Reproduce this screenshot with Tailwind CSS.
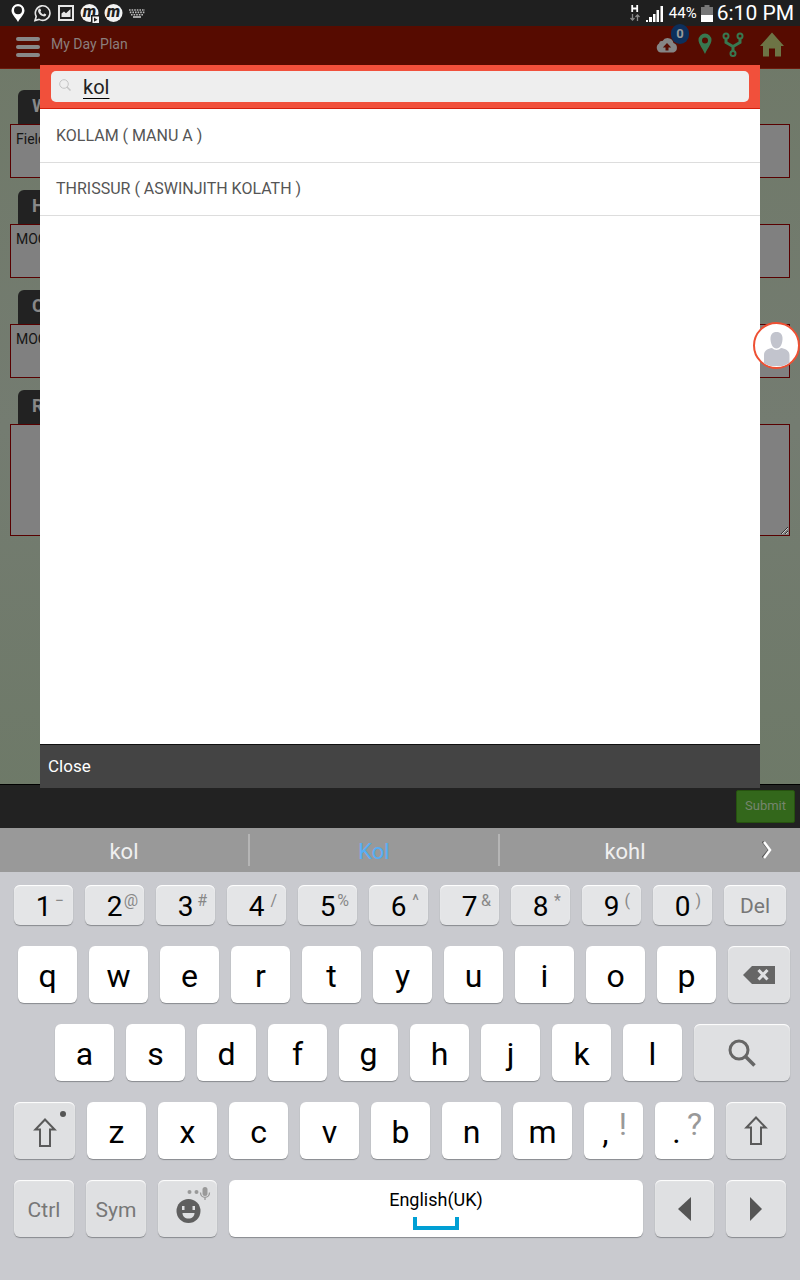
<!DOCTYPE html>
<html lang="en">
<head>
<meta charset="utf-8">
<meta name="viewport" content="width=device-width, initial-scale=1">
<title>My Day Plan</title>
<script src="https://cdn.jsdelivr.net/npm/@tailwindcss/browser@4"></script>
</head>
<body class="flex min-h-screen flex-col bg-[#c9cacf] font-[Roboto,sans-serif]">

<!-- Status bar -->
<div class="flex h-[26px] items-center justify-between bg-[#1f1f1f] pr-[6px] pl-[10px] text-white">
  <div class="flex items-center gap-[6px]">
    <svg class="h-[18px] w-4" viewBox="0 0 16 18" aria-label="Location"><path fill="#fff" fill-rule="evenodd" d="M8 0a6.500 6.500 0 0 1 6.500 6.500C14.500 10.500 10 14 8 18 6 14 1.500 10.500 1.500 6.500A6.500 6.500 0 0 1 8 0zm0 2.300a4 4 0 1 0 0 8 4 4 0 0 0 0-8z"/></svg>
    <svg class="h-[18px] w-[20px]" viewBox="0 0 20 18" aria-label="WhatsApp" fill="none"><path stroke="#e6e6e6" stroke-width="1.600" d="M3 16.500l1.200-4A7.300 7.300 0 1 1 7 15.400z"/><path fill="#e6e6e6" d="M7.300 4.700c.6-.3 1-.1 1.200.4l.6 1.400c.1.500-.6.900-.7 1.300.6 1.200 1.600 2.100 2.800 2.600.5-.2.800-1 1.200-.9l1.600.8c.4.300 0 1.300-.5 1.700-.8.600-1.900.5-2.900.1-2-.8-3.700-2.400-4.400-4.400-.3-1.100 0-2.300 1.100-3z"/></svg>
    <svg class="h-[18px] w-[16px]" viewBox="0 0 16 18" aria-label="Image"><path fill="none" stroke="#e6e6e6" stroke-width="2" d="M1 2h14v14H1z"/><path fill="#e6e6e6" d="M3.500 13V9.500L6 7.500l2 1.800L12.500 5v8z"/></svg>
    <svg class="h-5 w-[19px]" viewBox="0 0 19 20" aria-label="App"><circle cx="9.500" cy="10" r="9" fill="#f2f2f2"/><text x="9.500" y="14" text-anchor="middle" class="text-[16px] font-black italic" fill="#1f1f1f">m</text><path fill="#1f1f1f" d="M11 12h8v8h-8z"/><path fill="#f2f2f2" d="M12.500 13.500h6.500v6.500h-6.500z"/><path fill="#1f1f1f" d="M14 14.500l3.500 2.200-3.500 2z"/></svg>
    <svg class="-ml-px h-5 w-[19px]" viewBox="0 0 19 20" aria-label="App"><circle cx="9.500" cy="10" r="9" fill="#f2f2f2"/><text x="9.500" y="14" text-anchor="middle" class="text-[16px] font-black italic" fill="#1f1f1f">m</text></svg>
    <svg class="h-[9px] w-4" viewBox="0 0 16 9" aria-label="Keyboard"><path stroke="#bbb" stroke-width="1.600" stroke-dasharray="1.600 1" d="M0 1h16M.8 3.400h15M2 5.800h12"/><path stroke="#ddd" stroke-width="1.400" d="M4 8h8"/></svg>
  </div>
  <div class="flex items-center">
    <svg class="mr-[6px] h-[18px] w-[10px]" viewBox="0 0 10 18" aria-label="HSPA" fill="none"><path stroke="#fff" stroke-width="1.800" d="M2.200 1v7M7.200 1v7M2.200 4.500h5"/><path stroke="#888" stroke-width="1.300" d="M2.500 10v6M.5 14l2 2 2-2M7.500 17v-6M5.500 13l2-2 2 2"/></svg>
    <svg class="mr-[6px] h-[17px] w-[17px]" viewBox="0 0 17 17" aria-label="Signal"><path fill="#fff" d="M0 15h2v2H0zM3 12h3v5H3zM7 9h2.500v8H7zM10.500 5H13v12h-2.500zM14.500 1H17v16h-2.500z"/></svg>
    <span class="text-[15px] leading-[26px]">44%</span>
    <svg class="mx-1 h-[17px] w-[12px]" viewBox="0 0 12 17" aria-label="Battery"><path fill="#777" d="M3.500 0h5v2H12v8H0V2h3.500z"/><path fill="#fff" d="M0 10h12v7H0z"/></svg>
    <span class="text-[21px] leading-6">6:10 PM</span>
  </div>
</div>

<!-- App with search dialog on top -->
<div class="relative flex grow flex-col bg-linear-to-b from-[#6f7968] via-[#747c71] to-[#6d7967]">
  <header class="flex h-[43px] items-center justify-between border-b border-[#6d1a0c] bg-[#560b00] pr-4 pl-4">
    <div class="flex items-center gap-[11px]">
      <button class="flex w-6 flex-col gap-1" aria-label="Menu">
        <span class="h-1 rounded-xs bg-[#888]"></span><span class="h-1 rounded-xs bg-[#888]"></span><span class="h-1 rounded-xs bg-[#888]"></span>
      </button>
      <h1 class="pb-[6px] text-[14px] leading-5 text-[#8b7f7d]">My Day Plan</h1>
    </div>
    <div class="flex items-center pb-[6px]">
      <button class="relative mr-[20px] block" aria-label="Upload">
        <svg class="mt-0.5 h-4 w-[22px]" viewBox="0 0 22 16"><path fill="#858585" fill-rule="evenodd" d="M5 15.500A5 5 0 0 1 3 6.400 3 3 0 0 1 6.500 4 6 6 0 0 1 17.500 6 5 5 0 0 1 17.500 15.500zM11 6L6.800 10.500H9.500v3h3v-3h2.700z"/></svg>
        <span class="absolute -top-[11px] left-[15px] flex h-5 w-[18px] items-center justify-center rounded-full bg-[#0c2f5c] pb-0.5 text-[13px] leading-none font-bold text-[#999]">0</span>
      </button>
      <svg class="mr-[10px] h-[22px] w-[14px]" viewBox="0 0 14 22" aria-label="Place"><path fill="#38784f" fill-rule="evenodd" d="M7 .5A6.500 6.500 0 0 1 13.500 7c0 4-4.500 9-6.500 14C5 16 .5 11 .5 7A6.500 6.500 0 0 1 7 .5zm0 4a3 3 0 1 0 0 6 3 3 0 0 0 0-6z"/></svg>
      <svg class="mr-4 h-[25px] w-[22px]" viewBox="0 0 22 25" aria-label="Branches" fill="none" stroke="#38784f"><g stroke-width="2"><circle cx="4" cy="4" r="2.500"/><circle cx="18" cy="4" r="2.500"/><circle cx="11" cy="21.500" r="2.500"/></g><path stroke-width="3" d="M4 7v3.500l7 4 7-4V7M11 14v5"/></svg>
      <svg class="h-[25px] w-6" viewBox="0 0 24 25" aria-label="Home"><path fill="#6d7445" d="M12 .5L24 14h-3v10.500h-6v-8H9v8H3V14H0z"/></svg>
    </div>
  </header>

  <form id="plan" class="flex grow flex-col gap-3 px-[10px] pt-[21px]">
    <div>
      <label for="f1" class="ml-2 block h-[34px] w-40 rounded-t-md bg-[#222] px-[14px] text-[18px] leading-8 font-bold text-[#888]">W</label>
      <textarea id="f1" readonly class="block h-[54px] w-full resize-none border border-[#580000] bg-[#808080] px-[5px] py-1 text-[14px] leading-5 text-[#151515]">Field</textarea>
    </div>
    <div>
      <label for="f2" class="ml-2 block h-[34px] w-40 rounded-t-md bg-[#222] px-[14px] text-[18px] leading-8 font-bold text-[#888]">H</label>
      <textarea id="f2" readonly class="block h-[54px] w-full resize-none border border-[#580000] bg-[#808080] px-[5px] py-1 text-[14px] leading-5 text-[#151515]">MOO</textarea>
    </div>
    <div>
      <label for="f3" class="ml-2 block h-[34px] w-40 rounded-t-md bg-[#222] px-[14px] text-[18px] leading-8 font-bold text-[#888]">C</label>
      <textarea id="f3" readonly class="block h-[54px] w-full resize-none border border-[#580000] bg-[#808080] px-[5px] py-1 text-[14px] leading-5 text-[#151515]">MOO</textarea>
    </div>
    <div>
      <label for="f4" class="ml-2 block h-[34px] w-40 rounded-t-md bg-[#222] px-[14px] text-[18px] leading-8 font-bold text-[#888]">R</label>
      <textarea id="f4" class="block h-[112px] w-full resize border border-[#580000] bg-[#808080]"></textarea>
    </div>
  </form>

  <footer class="flex h-11 items-center justify-end border-t border-black bg-[#222] pr-[5px]">
    <button form="plan" class="h-[33px] rounded-xs border border-[#26520f] bg-[#33671b] px-2 pb-0.5 text-[13px] text-[#76856e]">Submit</button>
  </footer>

  <!-- Search dialog -->
  <div role="dialog" aria-label="Search" class="absolute inset-x-10 top-[39px] bottom-10 flex flex-col bg-white">
    <div class="h-11 border-b border-[#d3200c] bg-[#f1503b] px-[11px] pt-[6px]">
      <label class="flex h-[31px] items-center rounded-[5px] bg-[#eee] pl-2">
        <svg class="mb-1 h-3 w-3" viewBox="0 0 12 12" fill="none" stroke="#c4c4c4"><circle cx="5" cy="5" r="4.300"/><path stroke-width="1.500" d="M8 8l3.500 3.500"/></svg>
        <input type="text" value="kol" aria-label="Search" class="ml-3 h-[31px] min-w-0 grow bg-transparent text-[20px] text-[#222] underline decoration-black decoration-1 underline-offset-4 outline-none">
      </label>
    </div>
    <ul class="grow text-[16px] text-[#555]">
      <li class="flex h-[54px] items-center border-b border-[#ddd] px-4">KOLLAM ( MANU A )</li>
      <li class="flex h-[53px] items-center border-b border-[#ddd] px-4">THRISSUR ( ASWINJITH KOLATH )</li>
    </ul>
    <div class="flex h-11 items-center border-t border-[#111] bg-[#444] px-2">
      <button class="text-[17px] text-white">Close</button>
    </div>
  </div>

  <!-- Floating contact bubble -->
  <button aria-label="Contact" class="absolute top-[296px] right-0 h-[47px] w-[47px] overflow-hidden rounded-full border-2 border-[#ee5033] bg-white">
    <svg class="h-full w-full" viewBox="0 0 43 43" fill="#c2c4cd"><path d="M21.500 8c4 0 6.300 2.500 6 7.500-.3 5-2.500 9-6 9s-5.700-4-6-9c-.3-5 2-7.500 6-7.500z"/><path d="M9 42V31c0-4.500 4-6.500 8-7 2.500 2.500 6.500 2.500 9 0 4 .5 8.500 2.500 8.500 7v11z"/></svg>
  </button>
</div>

<!-- Suggestions -->
<div class="flex h-11 items-center bg-[#999] text-[22px] text-[#f0f0f0]">
  <button class="h-8 w-5/16 border-r-2 border-[#b5b5b5] leading-[36px]">kol</button>
  <button class="h-8 w-5/16 border-r-2 border-[#b5b5b5] leading-[36px] text-[#55aef5]">Kol</button>
  <button class="h-8 w-5/16 leading-[36px]">kohl</button>
  <button class="flex w-1/16 pl-3" aria-label="More"><svg class="h-5 w-[10px]" viewBox="0 0 10 20" fill="none"><path stroke="#555" stroke-width="2" d="M.5 1.500L7 10 .5 17.500"/><path stroke="#fff" stroke-width="2.500" d="M2 2l6 8-6 8"/></svg></button>
</div>

<!-- Keyboard -->
<div class="flex flex-col gap-[21px] pt-[13px] pb-[43px] text-[32px] text-black">
  <div class="flex h-10 gap-3 px-[14px] text-[28px] *:flex *:flex-1 *:justify-center *:rounded-md *:bg-[#e4e5e7] *:shadow-[0_1px_1px_#888a8e,inset_0_1px_1px_#fff]">
    <button class="relative leading-[44px]">1<span class="absolute top-1 right-[9px] text-[16px] leading-6 text-[#888]">−</span></button>
    <button class="relative leading-[44px]">2<span class="absolute top-1 right-[6px] text-[16px] leading-6 text-[#888]">@</span></button>
    <button class="relative leading-[44px]">3<span class="absolute top-1 right-[8px] text-[16px] leading-6 text-[#888]">#</span></button>
    <button class="relative leading-[44px]">4<span class="absolute top-1 right-[9px] text-[16px] leading-6 text-[#888]">/</span></button>
    <button class="relative leading-[44px]">5<span class="absolute top-1 right-[8px] text-[16px] leading-6 text-[#888]">%</span></button>
    <button class="relative leading-[44px]">6<span class="absolute top-1 right-[9px] text-[16px] leading-6 text-[#888]">^</span></button>
    <button class="relative leading-[44px]">7<span class="absolute top-1 right-[8px] text-[16px] leading-6 text-[#888]">&amp;</span></button>
    <button class="relative leading-[44px]">8<span class="absolute top-1 right-[9px] text-[16px] leading-6 text-[#888]">*</span></button>
    <button class="relative leading-[44px]">9<span class="absolute top-1 right-[11px] text-[16px] leading-6 text-[#888]">(</span></button>
    <button class="relative leading-[44px]">0<span class="absolute top-1 right-[11px] text-[16px] leading-6 text-[#888]">)</span></button>
    <button class="max-w-[62px] min-w-[62px] text-[21px] leading-[42px] text-[#777]">Del</button>
  </div>

  <div class="flex h-[57px] gap-3 pr-[10px] pl-[18px] leading-[60px]">
    <button class="flex-1 rounded-md bg-white shadow-[0_1px_1px_#888a8e]">q</button>
    <button class="flex-1 rounded-md bg-white shadow-[0_1px_1px_#888a8e]">w</button>
    <button class="flex-1 rounded-md bg-white shadow-[0_1px_1px_#888a8e]">e</button>
    <button class="flex-1 rounded-md bg-white shadow-[0_1px_1px_#888a8e]">r</button>
    <button class="flex-1 rounded-md bg-white shadow-[0_1px_1px_#888a8e]">t</button>
    <button class="flex-1 rounded-md bg-white shadow-[0_1px_1px_#888a8e]">y</button>
    <button class="flex-1 rounded-md bg-white shadow-[0_1px_1px_#888a8e]">u</button>
    <button class="flex-1 rounded-md bg-white shadow-[0_1px_1px_#888a8e]">i</button>
    <button class="flex-1 rounded-md bg-white shadow-[0_1px_1px_#888a8e]">o</button>
    <button class="flex-1 rounded-md bg-white shadow-[0_1px_1px_#888a8e]">p</button>
    <button aria-label="Backspace" class="flex w-[62px] items-center justify-center rounded-md bg-[#dfe0e2] shadow-[0_1px_1px_#888a8e,inset_0_1px_1px_#fff]"><svg class="h-[18px] w-8" viewBox="0 0 32 18"><path fill="#666" d="M0 9L9 0h23v18H9z"/><path stroke="#dfe0e2" stroke-width="3" d="M15.500 4l9 9.500M24.500 4l-9 9.500"/></svg></button>
  </div>

  <div class="flex h-[57px] gap-3 pr-[10px] pl-[55px] leading-[60px]">
    <button class="flex-1 rounded-md bg-white shadow-[0_1px_1px_#888a8e]">a</button>
    <button class="flex-1 rounded-md bg-white shadow-[0_1px_1px_#888a8e]">s</button>
    <button class="flex-1 rounded-md bg-white shadow-[0_1px_1px_#888a8e]">d</button>
    <button class="flex-1 rounded-md bg-white shadow-[0_1px_1px_#888a8e]">f</button>
    <button class="flex-1 rounded-md bg-white shadow-[0_1px_1px_#888a8e]">g</button>
    <button class="flex-1 rounded-md bg-white shadow-[0_1px_1px_#888a8e]">h</button>
    <button class="flex-1 rounded-md bg-white shadow-[0_1px_1px_#888a8e]">j</button>
    <button class="flex-1 rounded-md bg-white shadow-[0_1px_1px_#888a8e]">k</button>
    <button class="flex-1 rounded-md bg-white shadow-[0_1px_1px_#888a8e]">l</button>
    <button aria-label="Search" class="flex w-24 items-center justify-center rounded-md bg-[#dfe0e2] shadow-[0_1px_1px_#888a8e,inset_0_1px_1px_#fff]"><svg class="h-7 w-7" viewBox="0 0 28 28" fill="none" stroke="#666"><circle cx="11" cy="11" r="9" stroke-width="3"/><path stroke-width="3.600" d="M17 17l9.500 9.500"/></svg></button>
  </div>

  <div class="flex h-[57px] gap-3 px-[14px] leading-[60px]">
    <button aria-label="Shift" class="relative flex w-[61px] items-center justify-center rounded-md bg-[#dfe0e2] pt-1 shadow-[0_1px_1px_#888a8e,inset_0_1px_1px_#fff]"><svg class="h-[29px] w-6" viewBox="0 0 24 29" fill="none"><path stroke="#5a5a5a" stroke-width="2" d="M12 1.500L21.600 11.500H17V28H7V11.500H2.400z"/></svg><span class="absolute top-[9px] right-[9px] h-[6px] w-[6px] rounded-full bg-[#555]"></span></button>
    <button class="flex-1 rounded-md bg-white shadow-[0_1px_1px_#888a8e]">z</button>
    <button class="flex-1 rounded-md bg-white shadow-[0_1px_1px_#888a8e]">x</button>
    <button class="flex-1 rounded-md bg-white shadow-[0_1px_1px_#888a8e]">c</button>
    <button class="flex-1 rounded-md bg-white shadow-[0_1px_1px_#888a8e]">v</button>
    <button class="flex-1 rounded-md bg-white shadow-[0_1px_1px_#888a8e]">b</button>
    <button class="flex-1 rounded-md bg-white shadow-[0_1px_1px_#888a8e]">n</button>
    <button class="flex-1 rounded-md bg-white shadow-[0_1px_1px_#888a8e]">m</button>
    <button class="relative flex-1 rounded-md bg-white shadow-[0_1px_1px_#888a8e]"><span class="block pr-4">,</span><span class="absolute top-[6px] right-4 leading-8 text-[#999]">!</span></button>
    <button class="relative flex-1 rounded-md bg-white shadow-[0_1px_1px_#888a8e]"><span class="block pr-4">.</span><span class="absolute top-[6px] right-3 leading-8 text-[#999]">?</span></button>
    <button aria-label="Shift" class="flex w-[60px] items-center justify-center rounded-md bg-[#dfe0e2] shadow-[0_1px_1px_#888a8e,inset_0_1px_1px_#fff]"><svg class="h-[29px] w-6" viewBox="0 0 24 29" fill="none"><path stroke="#5a5a5a" stroke-width="2" d="M12 1.500L21.600 11.500H17V28H7V11.500H2.400z"/></svg></button>
  </div>

  <div class="flex h-[57px] gap-3 px-[14px] text-[21px] leading-[60px] text-[#777]">
    <button class="w-[60px] rounded-md bg-[#dfe0e2] shadow-[0_1px_1px_#888a8e,inset_0_1px_1px_#fff]">Ctrl</button>
    <button class="w-[60px] rounded-md bg-[#dfe0e2] shadow-[0_1px_1px_#888a8e,inset_0_1px_1px_#fff]">Sym</button>
    <button aria-label="Emoji" class="w-[59px] rounded-md bg-[#dfe0e2] shadow-[0_1px_1px_#888a8e,inset_0_1px_1px_#fff]"><svg class="h-[57px] w-[59px]" viewBox="0 0 59 57"><circle cx="30.500" cy="31" r="12" fill="#5f5f5f"/><path fill="#dfe0e2" d="M24 26h2.500v4H24zM34.500 26H37v4h-2.500zM24.500 33h12c0 3.500-2.500 5.500-6 5.500s-6-2-6-5.500z"/><circle cx="31.500" cy="12" r="2" fill="#999"/><circle cx="38.500" cy="12" r="2" fill="#999"/><rect x="44.500" y="7" width="5" height="9" rx="2.500" fill="#999"/><path fill="none" stroke="#999" stroke-width="1.300" d="M42.500 12.500c0 6.500 9 6.500 9 0M47 17v3"/></svg></button>
    <button class="flex flex-1 flex-col items-center rounded-md bg-white pt-2 text-[18px] leading-6 text-black shadow-[0_1px_1px_#888a8e]">English(UK)<span class="mt-[5px] h-[13px] w-[46px] border-4 border-t-0 border-[#009fd4]"></span></button>
    <button aria-label="Left" class="flex w-[59px] items-center justify-center rounded-md bg-[#dfe0e2] shadow-[0_1px_1px_#888a8e,inset_0_1px_1px_#fff]"><svg class="h-6 w-[13px]" viewBox="0 0 13 24"><path fill="#555" d="M13 0v24L0 12z"/></svg></button>
    <button aria-label="Right" class="flex w-[60px] items-center justify-center rounded-md bg-[#dfe0e2] shadow-[0_1px_1px_#888a8e,inset_0_1px_1px_#fff]"><svg class="h-6 w-3" viewBox="0 0 12 24"><path fill="#555" d="M0 0v24l12-12z"/></svg></button>
  </div>
</div>
</body>
</html>
